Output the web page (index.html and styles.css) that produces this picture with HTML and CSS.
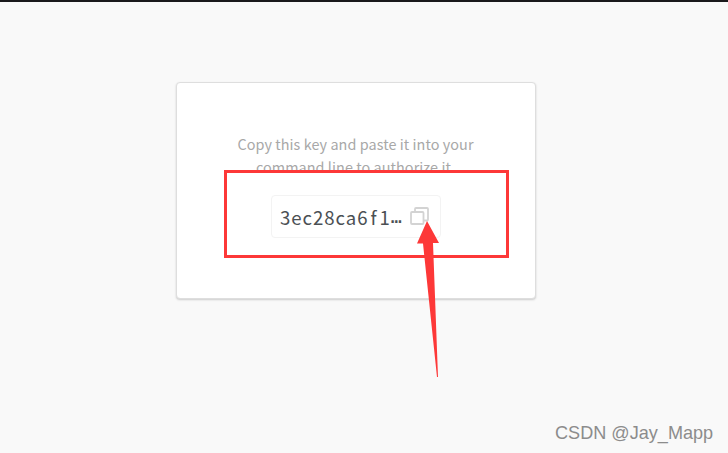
FILE: index.html
```html
<!DOCTYPE html>
<html lang="en">
<head>
<meta charset="utf-8">
<title>Authorize</title>
<link rel="stylesheet" href="styles.css">
</head>
<body>
<main class="card">
  <p class="message">Copy this key and paste it into your<br>command line to authorize it.</p>
  <div class="highlight">
    <div class="key">
      <span class="key-text">3ec28ca6<span class="narrow">f</span>1<span class="dots">…</span></span>
      <svg class="copy" width="20" height="20" viewBox="0 0 20 20" fill="none" stroke="#d3d3d3" stroke-width="1.8">
        <rect x="1" y="5" width="12.500" height="12" rx="1"/>
        <path d="M5 4.500V2a1 1 0 0 1 1-1h11a1 1 0 0 1 1 1v10.500a1 1 0 0 1-1 1H14"/>
      </svg>
    </div>
  </div>
</main>
<svg class="arrow" width="24" height="158" viewBox="0 0 24 158"><path d="M10 0L22 22L16 22L21 156H20L6 22.500H0Z" fill="#fd3838"/></svg>
<div class="watermark">CSDN @Jay_Mapp</div>
</body>
</html>
```
FILE: styles.css
```css
* { box-sizing: border-box; }
body {
  margin: 0;
  height: 453px;
  padding-top: 80px;
  border-top: 2px solid #1a191c;
  background: #f9f9f9;
  overflow: hidden;
}
.card {
  width: 360px;
  height: 217px;
  margin-left: 176px;
  padding: 49px 0 0;
  border: 1px solid #dedede;
  border-radius: 4px;
  background: #fff;
  box-shadow: 0 1px 2px #ccc;
}
.message {
  height: 60px;
  margin: 0 1px -22px 0;
  color: #a8a8a8;
  font: 400 14.4px/23px "Noto Sans CJK SC", sans-serif;
  letter-spacing: .07px;
  text-align: center;
  white-space: nowrap;
}
.highlight {
  position: relative;
  width: 285px;
  height: 88px;
  margin-left: 47px;
  padding: 22px 0 0 44px;
  border: 3px solid #fd3838;
  background: #fff;
}
.key {
  display: flex;
  align-items: center;
  width: 170px;
  height: 43px;
  padding-left: 8px;
  border: 1px solid #f3f3f3;
  border-radius: 4px;
}
.key-text {
  display: flex;
  width: 123px;
  color: #4b5054;
  font: 400 18.6px/41px "Noto Sans CJK SC", sans-serif;
  letter-spacing: .95px;
  white-space: nowrap;
}
.narrow { width: 11px; text-align: center; }
.dots { font: 18.4px/41px "DejaVu Sans Mono", monospace; letter-spacing: 0; }
.copy { margin-left: 7px; }
.arrow { position: absolute; left: 417px; top: 221px; }
.watermark {
  position: absolute;
  left: 555px;
  top: 422px;
  color: #8c8c8c;
  font: 18.1px/22px "Liberation Sans", sans-serif;
  white-space: nowrap;
}
```
